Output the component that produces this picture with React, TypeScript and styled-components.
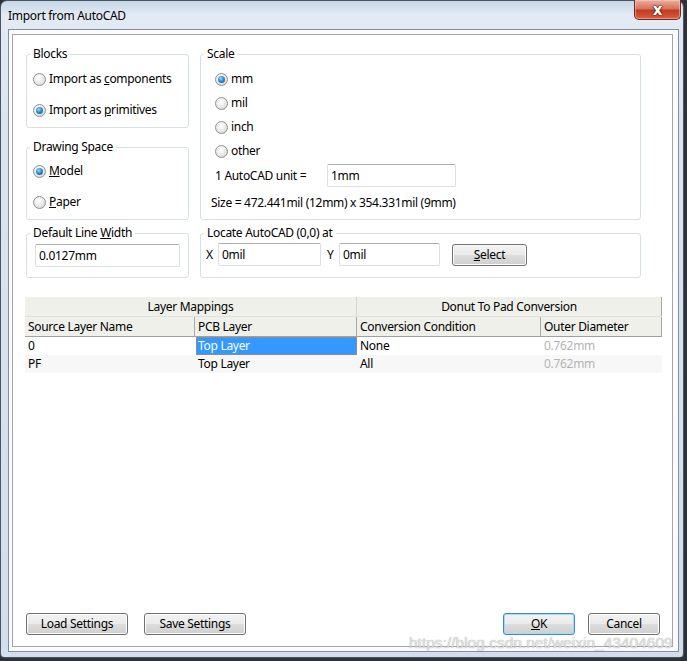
import styled, { createGlobalStyle } from "styled-components"

const GlobalStyle = createGlobalStyle`
  html, body {
    margin: 0;
    padding: 0;
    background: #2d323a;
  }
  body {
    font-family: "Noto Sans", "Open Sans", sans-serif;
    font-size: 12px;
    letter-spacing: -0.3px;
    color: #000;
  }
`

const Window = styled.div`
  position: relative;
  width: 684px;
  height: 658px;
  box-sizing: border-box;
  border: 1px solid #4a5563;
  border-radius: 7px 7px 4px 4px;
  background: linear-gradient(180deg, #c8d6e8 0%, #e2eaf4 14px, #dbe5f1 120px, #d2deec 100%);
  display: flex;
  flex-direction: column;
  padding: 0 4px 5px 7px;
`

const TitleBar = styled.div`
  height: 28px;
  display: flex;
  align-items: center;
  font-size: 12px;
  color: #000;
`

const CloseButton = styled.div`
  position: absolute;
  top: -1px;
  right: 2px;
  width: 47px;
  height: 20px;
  box-sizing: border-box;
  border: 1px solid #6e2a22;
  border-top: none;
  border-radius: 0 0 5px 5px;
  background: linear-gradient(180deg, #eab0a0 0%, #d8735c 45%, #c23a22 55%, #d9603f 100%);
  box-shadow: inset 0 0 0 1px rgba(255, 220, 210, 0.45);
  display: flex;
  align-items: center;
  justify-content: center;
  color: #fff;
  font-family: "DejaVu Sans", sans-serif;
  font-weight: bold;
  font-size: 15px;
  letter-spacing: 0;
  line-height: 18px;
  text-shadow: 0 0 1px #3a1a14, 0 0 1px #3a1a14, 0 0 2px #3a1a14;
`

const Client = styled.div`
  flex: 1;
  border: 1px solid #8090a4;
  background: #fbfbfb;
  padding: 4px 5px 4px 3px;
  display: flex;
`

const Panel = styled.div`
  flex: 1;
  border: 1px solid #a5a5a5;
  background: #fff;
  padding: 11px 8px 11px 12px;
  display: flex;
  flex-direction: column;
`

const TopGrid = styled.div`
  margin-left: 1px;
  display: grid;
  grid-template-columns: 163px 441px;
  grid-template-rows: 82px 81px;
  column-gap: 11px;
  row-gap: 11px;
`

const SecondGrid = styled.div`
  margin-left: 1px;
  margin-top: 5px;
  display: grid;
  grid-template-columns: 163px 441px;
  grid-template-rows: 53px;
  column-gap: 11px;
`

const Group = styled.fieldset<{ $span?: boolean }>`
  margin: 0;
  padding: 0;
  min-width: 0;
  box-sizing: border-box;
  border: 1px solid #d5dfe5;
  border-radius: 3px;
  grid-row: ${(p) => (p.$span ? "1 / 3" : "auto")};
  grid-column: ${(p) => (p.$span ? "2" : "auto")};
`

const Legend = styled.legend`
  padding: 0 3px;
  margin-left: 3px;
  line-height: 16px;
`

const GroupBody = styled.div<{ $gap: number; $pl: number; $pt: number }>`
  display: flex;
  flex-direction: column;
  gap: ${(p) => p.$gap}px;
  padding-left: ${(p) => p.$pl}px;
  padding-top: ${(p) => p.$pt}px;
`

const RadioRow = styled.label`
  display: flex;
  align-items: center;
  gap: 3px;
  height: 18px;
  line-height: 18px;
`

const RadioCircle = styled.span<{ $on?: boolean }>`
  position: relative;
  width: 13px;
  height: 13px;
  box-sizing: border-box;
  border-radius: 50%;
  border: 1px solid #8f9090;
  background: radial-gradient(circle at 40% 35%, #ffffff 0%, #ececec 45%, #cfcfcf 100%);
  flex: none;
  &::after {
    content: "";
    display: ${(p) => (p.$on ? "block" : "none")};
    position: absolute;
    left: 2px;
    top: 2px;
    width: 7px;
    height: 7px;
    border-radius: 50%;
    background: radial-gradient(circle at 40% 35%, #9ad8fb 0%, #2f8fd0 45%, #0a4d86 100%);
  }
`

const UnitRow = styled.div`
  display: flex;
  align-items: center;
  height: 23px;
  margin-top: 4px;
`

const UnitLabel = styled.span`
  width: 112px;
`

const SizeText = styled.div`
  margin-left: -4px;
  margin-top: 7px;
  height: 18px;
  line-height: 18px;
`

const TextInput = styled.div<{ $w: number }>`
  width: ${(p) => p.$w}px;
  height: 23px;
  box-sizing: border-box;
  border: 1px solid #dbe0e6;
  border-top-color: #abadb3;
  border-radius: 2px;
  background: #fff;
  padding-left: 3px;
  line-height: 21px;
`

const InlineRow = styled.div`
  display: flex;
  align-items: center;
  padding-left: 5px;
  padding-top: 2px;
`

const AxisLabel = styled.span<{ $ml?: number }>`
  width: 12px;
  margin-left: ${(p) => p.$ml ?? 0}px;
`

const Button = styled.div<{ $w: number; $focus?: boolean; $ml?: number }>`
  width: ${(p) => p.$w}px;
  height: 22px;
  margin-left: ${(p) => p.$ml ?? 0}px;
  box-sizing: border-box;
  border: 1px solid ${(p) => (p.$focus ? "#3c8dc4" : "#707070")};
  border-radius: 3px;
  background: linear-gradient(180deg, #f2f2f2 0%, #ebebeb 48%, #dddddd 52%, #cfcfcf 100%);
  box-shadow: inset 0 0 0 1px ${(p) => (p.$focus ? "#9fdcf7" : "#fcfcfc")};
  display: flex;
  align-items: center;
  justify-content: center;
  line-height: 20px;
`

const Table = styled.div`
  margin-top: 19px;
  width: 637px;
  display: flex;
  flex-direction: column;
`

const TableRow = styled.div`
  display: grid;
  grid-template-columns: 170px 162px 184px 121px;
`

const GroupHeadRow = styled.div`
  display: grid;
  grid-template-columns: 332px 305px;
  background: #f0f0eb;
  height: 20px;
  border-bottom: 1px solid #e2e2dc;
  box-sizing: border-box;
`

const GroupHead = styled.div<{ $last?: boolean }>`
  text-align: center;
  line-height: 19px;
  border-right: 1px solid ${(p) => (p.$last ? "#a8a8a8" : "#d6d6d0")};
`

const ColHeadRow = styled(TableRow)`
  background: #f0f0eb;
  height: 20px;
  box-sizing: border-box;
  border-bottom: 1px solid #a0a0a0;
`

const ColHead = styled.div`
  padding-left: 3px;
  line-height: 19px;
  border-right: 1px solid #a8a8a8;
`

const DataRow = styled(TableRow)<{ $alt?: boolean }>`
  height: 18px;
  background: ${(p) => (p.$alt ? "#f7f7f7" : "#fff")};
`

const Cell = styled.div<{ $muted?: boolean; $selected?: boolean }>`
  box-sizing: border-box;
  color: ${(p) => (p.$selected ? "#fff" : p.$muted ? "#b4b4b4" : "#000")};
  background: ${(p) => (p.$selected ? "#3399ff" : "transparent")};
  border: ${(p) => (p.$selected ? "1px dotted #d9823a" : "none")};
  line-height: ${(p) => (p.$selected ? "16px" : "18px")};
  padding-left: ${(p) => (p.$selected ? "1px" : "3px")};
  margin-left: ${(p) => (p.$selected ? "1px" : "0")};
`

const ButtonRow = styled.div`
  margin-top: auto;
  margin-left: 1px;
  margin-right: 4px;
  display: flex;
  align-items: center;
`

const Spacer = styled.div<{ $w?: number }>`
  flex: ${(p) => (p.$w ? "none" : "1")};
  width: ${(p) => (p.$w ? `${p.$w}px` : "auto")};
`

const Watermark = styled.div`
  position: absolute;
  left: 408px;
  top: 633px;
  font-family: "Liberation Sans", Arial, sans-serif;
  font-size: 15.5px;
  letter-spacing: 0;
  color: rgba(232, 232, 232, 0.9);
  text-shadow: 0 0 1px rgba(110, 110, 110, 0.7);
  pointer-events: none;
  white-space: nowrap;
`

export default function App() {
  return (
    <>
      <GlobalStyle />
      <Window>
        <TitleBar>Import from AutoCAD</TitleBar>
        <CloseButton>x</CloseButton>
        <Client>
          <Panel>
            <TopGrid>
              <Group>
                <Legend>Blocks</Legend>
                <GroupBody $gap={13} $pl={6} $pt={8}>
                  <RadioRow>
                    <RadioCircle />
                    <span>
                      Import as <u>c</u>omponents
                    </span>
                  </RadioRow>
                  <RadioRow>
                    <RadioCircle $on />
                    <span>
                      Import as <u>p</u>rimitives
                    </span>
                  </RadioRow>
                </GroupBody>
              </Group>
              <Group $span>
                <Legend>Scale</Legend>
                <GroupBody $gap={6} $pl={14} $pt={8}>
                  <RadioRow>
                    <RadioCircle $on />
                    <span>mm</span>
                  </RadioRow>
                  <RadioRow>
                    <RadioCircle />
                    <span>mil</span>
                  </RadioRow>
                  <RadioRow>
                    <RadioCircle />
                    <span>inch</span>
                  </RadioRow>
                  <RadioRow>
                    <RadioCircle />
                    <span>other</span>
                  </RadioRow>
                </GroupBody>
                <GroupBody $gap={0} $pl={14} $pt={0}>
                  <UnitRow>
                    <UnitLabel>1 AutoCAD unit =</UnitLabel>
                    <TextInput $w={129}>1mm</TextInput>
                  </UnitRow>
                  <SizeText>Size = 472.441mil (12mm) x 354.331mil (9mm)</SizeText>
                </GroupBody>
              </Group>
              <Group>
                <Legend>Drawing Space</Legend>
                <GroupBody $gap={13} $pl={6} $pt={7}>
                  <RadioRow>
                    <RadioCircle $on />
                    <span>
                      <u>M</u>odel
                    </span>
                  </RadioRow>
                  <RadioRow>
                    <RadioCircle />
                    <span>
                      <u>P</u>aper
                    </span>
                  </RadioRow>
                </GroupBody>
              </Group>
            </TopGrid>
            <SecondGrid>
              <Group>
                <Legend>
                  Default Line <u>W</u>idth
                </Legend>
                <GroupBody $gap={0} $pl={8} $pt={3}>
                  <TextInput $w={145}>0.0127mm</TextInput>
                </GroupBody>
              </Group>
              <Group>
                <Legend>Locate AutoCAD (0,0) at</Legend>
                <InlineRow>
                  <AxisLabel>X</AxisLabel>
                  <TextInput $w={103}>0mil</TextInput>
                  <AxisLabel $ml={6}>Y</AxisLabel>
                  <TextInput $w={101}>0mil</TextInput>
                  <Spacer $w={12} />
                  <Button $w={75}>
                    <span>
                      <u>S</u>elect
                    </span>
                  </Button>
                </InlineRow>
              </Group>
            </SecondGrid>
            <Table>
              <GroupHeadRow>
                <GroupHead>Layer Mappings</GroupHead>
                <GroupHead $last>Donut To Pad Conversion</GroupHead>
              </GroupHeadRow>
              <ColHeadRow>
                <ColHead>Source Layer Name</ColHead>
                <ColHead>PCB Layer</ColHead>
                <ColHead>Conversion Condition</ColHead>
                <ColHead>Outer Diameter</ColHead>
              </ColHeadRow>
              <DataRow>
                <Cell>0</Cell>
                <Cell $selected>Top Layer</Cell>
                <Cell>None</Cell>
                <Cell $muted>0.762mm</Cell>
              </DataRow>
              <DataRow $alt>
                <Cell>PF</Cell>
                <Cell>Top Layer</Cell>
                <Cell>All</Cell>
                <Cell $muted>0.762mm</Cell>
              </DataRow>
            </Table>
            <ButtonRow>
              <Button $w={102}>Load Settings</Button>
              <Button $w={102} $ml={16}>
                Save Settings
              </Button>
              <Spacer />
              <Button $w={72} $focus>
                <span>
                  <u>O</u>K
                </span>
              </Button>
              <Button $w={72} $ml={13}>
                Cancel
              </Button>
            </ButtonRow>
          </Panel>
        </Client>
        <Watermark>https://blog.csdn.net/weixin_43404609</Watermark>
      </Window>
    </>
  )
}
